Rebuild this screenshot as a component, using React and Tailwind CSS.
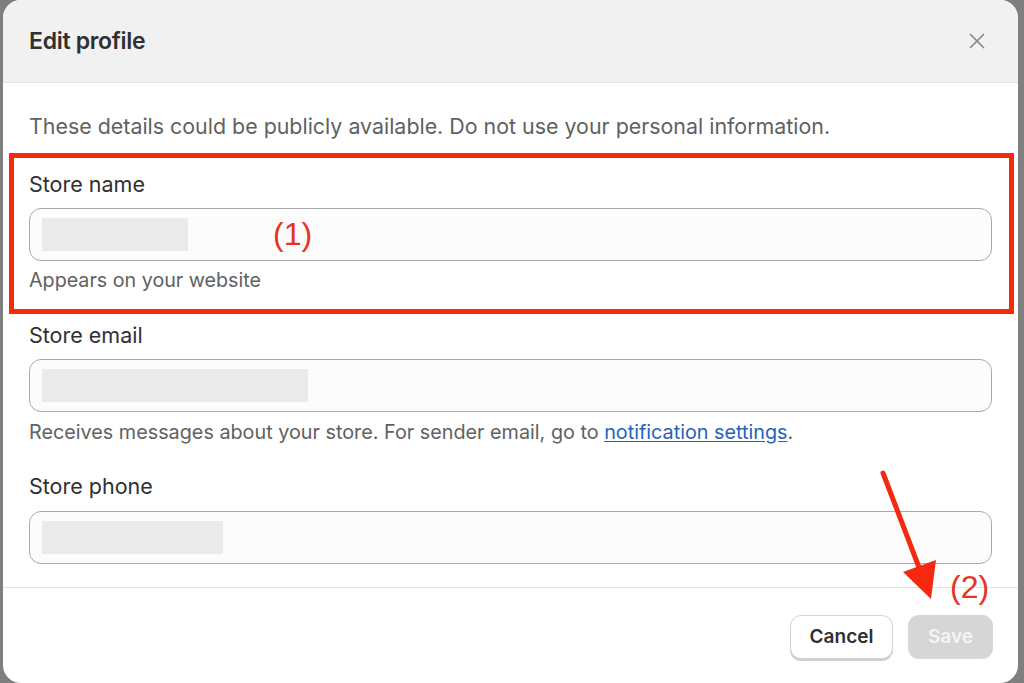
import { X } from "lucide-react"

function Field({ label, blockWidth, gap = "mt-[10px]", children }) {
    return (
        <div className="flex flex-col">
            <label className="text-[21.5px] leading-[28px] text-[#303030]">{label}</label>
            <div className={`${gap} h-[53px] rounded-[12px] border border-[#a8a8a8] bg-[#fdfcfd] flex items-center px-[12px]`}>
                <div className="h-[33px] bg-[#ebeaea]" style={{ width: blockWidth }} />
            </div>
            {children}
        </div>
    )
}

export default function App() {
    return (
        <div className="relative w-[1024px] h-[683px] overflow-hidden bg-[#7f7f7f] flex pl-[3px] pr-[6px] font-['Inter','Liberation_Sans',sans-serif]">
            {/* Modal */}
            <div className="relative z-10 flex-1 h-[683px] rounded-[18px] bg-white overflow-hidden flex flex-col">
                <header className="h-[83px] shrink-0 bg-[#f1f1f1] border-b border-[#e3e3e3] flex items-center justify-between pl-[26px] pr-[28px]">
                    <h2 className="text-[23px] font-semibold text-[#303030] tracking-[-0.3px]">Edit profile</h2>
                    <X className="h-[26px] w-[26px] text-[#8a8a8a]" strokeWidth={1.6} />
                </header>

                <div className="flex-1 px-[26px] pt-[29px]">
                    <p className="text-[21.4px] leading-[28px] text-[#616161]">
                        These details could be publicly available. Do not use your personal information.
                    </p>

                    <div className="mt-[30px]">
                        <Field label="Store name" blockWidth={146}>
                            <p className="mt-[6px] text-[19.7px] leading-[26px] text-[#616161]">Appears on your website</p>
                        </Field>
                    </div>

                    <div className="mt-[28px]">
                        <Field label="Store email" blockWidth={266}>
                            <p className="mt-[7px] text-[19.8px] leading-[26px] text-[#616161]">
                                Receives messages about your store. For sender email, go to{" "}
                                <a className="text-[#2463bc] underline underline-offset-2">notification settings</a>.
                            </p>
                        </Field>
                    </div>

                    <div className="mt-[27px]">
                        <Field label="Store phone" blockWidth={181} gap="mt-[11px]" />
                    </div>
                </div>

                <footer className="h-[96px] shrink-0 border-t border-[#e3e3e3] flex items-start justify-end gap-[15px] pt-[27px] pr-[25px]">
                    <button className="h-[44px] w-[103px] rounded-[11px] border border-[#d4d4d4] bg-white shadow-[0_2px_0_#cfcfcf] text-[19px] font-semibold text-[#303030]">
                        Cancel
                    </button>
                    <button className="h-[44px] w-[85px] rounded-[11px] bg-[#d6d6d6] text-[19px] font-semibold text-[#f4f4f4]">
                        Save
                    </button>
                </footer>
            </div>

            {/* Annotations */}
            <div className="absolute z-20 left-[9px] top-[153px] w-[1005px] h-[161px] border-[5px] border-[#f82a0c]" />
            <span className="absolute z-20 left-[273px] top-[215px] text-[32px] leading-[38px] text-[#e5341f] font-['Liberation_Sans',sans-serif]">(1)</span>
            <span className="absolute z-20 left-[950px] top-[568px] text-[32px] leading-[38px] text-[#e5341f] font-['Liberation_Sans',sans-serif]">(2)</span>
            <svg className="absolute z-20 left-0 top-0" width="1024" height="683" viewBox="0 0 1024 683">
                <line x1="883" y1="473" x2="920" y2="570" stroke="#f5290f" strokeWidth="5" strokeLinecap="round" />
                <polygon points="903,572 936,560 931,599" fill="#f5290f" />
            </svg>
        </div>
    )
}
